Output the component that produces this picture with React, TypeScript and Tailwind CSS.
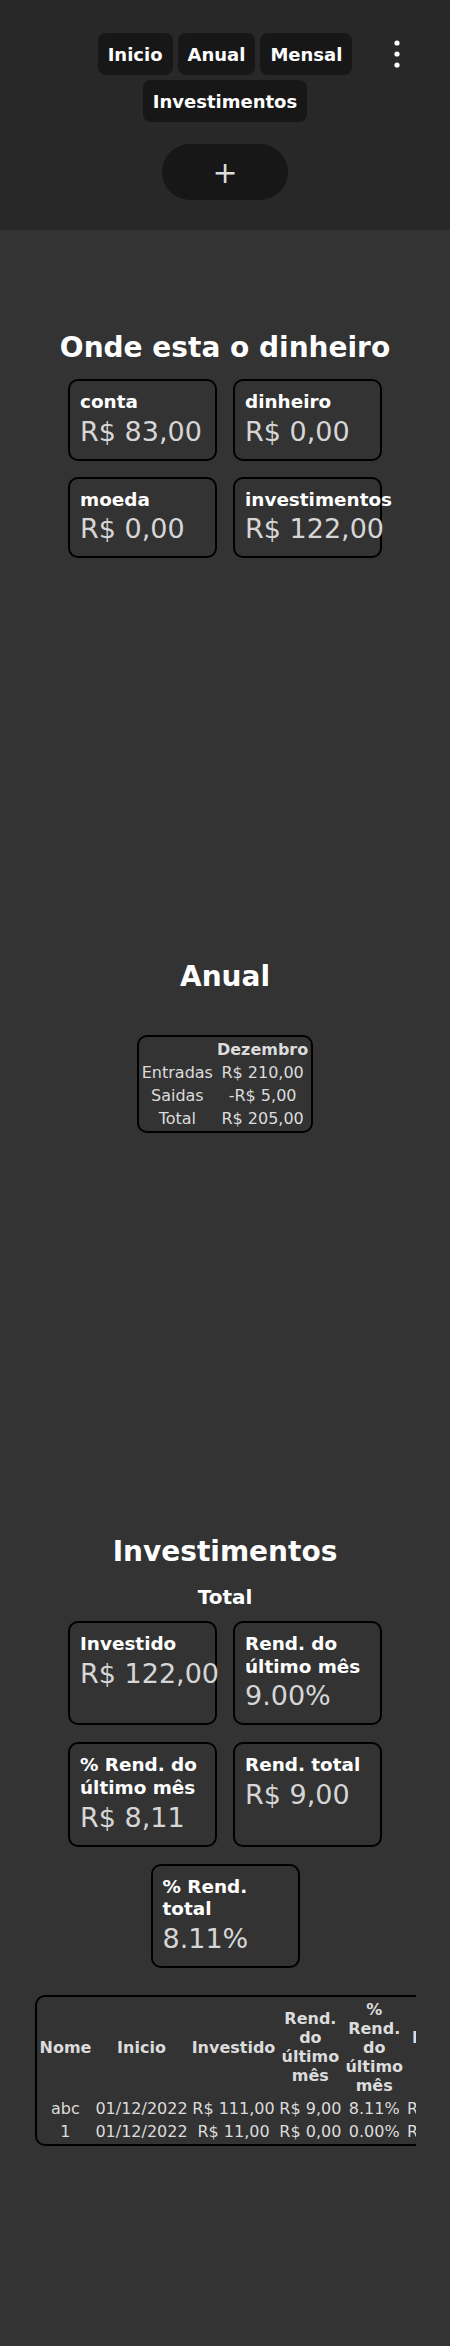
import React from 'react';

type Item = { label: string; value: string };

const dinheiro: Item[] = [
  { label: 'conta', value: 'R$ 83,00' },
  { label: 'dinheiro', value: 'R$ 0,00' },
  { label: 'moeda', value: 'R$ 0,00' },
  { label: 'investimentos', value: 'R$ 122,00' },
];

const totais: Item[] = [
  { label: 'Investido', value: 'R$ 122,00' },
  { label: 'Rend. do último mês', value: '9.00%' },
  { label: '% Rend. do último mês', value: 'R$ 8,11' },
  { label: 'Rend. total', value: 'R$ 9,00' },
  { label: '% Rend. total', value: '8.11%' },
];

const investimentos = [
  ['abc', '01/12/2022', 'R$ 111,00', 'R$ 9,00', '8.11%', 'R$ 9,00', '8.11%'],
  ['1', '01/12/2022', 'R$ 11,00', 'R$ 0,00', '0.00%', 'R$ 0,00', '0.00%'],
];

const Card: React.FC<Item> = ({ label, value }) => (
  <div className="w-[149px] border-2 border-black rounded-[10px] p-[10px]">
    <div className="text-[18.4px] leading-[22.6px] font-bold text-white">{label}</div>
    <div className="text-[27px] leading-[35px] text-[#d6d6d6] whitespace-nowrap">{value}</div>
  </div>
);

const Title: React.FC<{ children: React.ReactNode }> = ({ children }) => (
  <h2 className="text-[28px] leading-[33px] font-bold text-white text-center">{children}</h2>
);

const navItems = ['Inicio', 'Anual', 'Mensal', 'Investimentos'];

export default function App() {
  return (
    <div className="min-h-screen bg-[#333333] leading-[normal]" style={{ fontFamily: '"DejaVu Sans", "Liberation Sans", sans-serif' }}>
      <header className="bg-[#282828] pt-[33px] pb-[30px]">
        <div className="grid grid-cols-[1fr_270px_1fr]">
          <div />
          <nav className="flex flex-wrap justify-center gap-[5px]">
            {navItems.map((item) => (
              <button
                key={item}
                className="h-[42px] px-[10px] rounded-lg bg-[#171717] text-white font-bold text-[18px] flex items-center"
              >
                {item}
              </button>
            ))}
          </nav>
          <div className="flex items-start pl-[25px]">
            <button className="h-[42px] w-[24px] flex items-center justify-center">
              <svg width="24" height="42" viewBox="0 0 24 42">
                <circle cx="12" cy="10" r="2.6" fill="#ffffff" />
                <circle cx="12" cy="21" r="2.6" fill="#ffffff" />
                <circle cx="12" cy="32" r="2.6" fill="#ffffff" />
              </svg>
            </button>
          </div>
        </div>
        <div className="flex justify-center mt-[22px]">
          <button className="w-[126px] h-[56px] rounded-full bg-[#171717] text-[#dddddd] text-[30px] flex items-center justify-center">
            +
          </button>
        </div>
      </header>

      <section className="mt-[101px]">
        <Title>Onde esta o dinheiro</Title>
        <div className="w-[314px] mx-auto mt-[15px] flex flex-wrap justify-center gap-4">
          {dinheiro.map((d) => (
            <Card key={d.label} {...d} />
          ))}
        </div>
      </section>

      <section className="mt-[402px]">
        <Title>Anual</Title>
        <div className="mt-[42px] mx-auto w-max border-2 border-black rounded-[10px] text-[16px] leading-[19px] text-[#dcdcdc]">
          <table className="border-separate border-spacing-[2px] text-center">
            <thead>
              <tr>
                <th className="p-[1px]" />
                <th className="p-[1px] font-bold">Dezembro</th>
              </tr>
            </thead>
            <tbody>
              <tr>
                <td className="p-[1px]">Entradas</td>
                <td className="p-[1px] whitespace-nowrap">R$ 210,00</td>
              </tr>
              <tr>
                <td className="p-[1px]">Saidas</td>
                <td className="p-[1px] whitespace-nowrap">-R$ 5,00</td>
              </tr>
              <tr>
                <td className="p-[1px]">Total</td>
                <td className="p-[1px] whitespace-nowrap">R$ 205,00</td>
              </tr>
            </tbody>
          </table>
        </div>
      </section>

      <section className="mt-[402px] pb-[201px]">
        <Title>Investimentos</Title>
        <h3 className="mt-[17px] text-[20px] leading-[24px] font-bold text-white text-center">Total</h3>
        <div className="w-[314px] mx-auto mt-[12px] flex flex-wrap justify-center gap-x-4 gap-y-[17px]">
          {totais.map((t) => (
            <Card key={t.label} {...t} />
          ))}
        </div>
        <div className="mt-[27px] mx-auto w-[381px] overflow-hidden">
          <div className="w-max border-2 border-black rounded-[10px] text-[16px] leading-[19px] text-[#dcdcdc]">
            <table className="border-separate border-spacing-[2px] text-center">
              <thead>
                <tr className="font-bold">
                  <th className="p-[1px] align-middle">Nome</th>
                  <th className="p-[1px] align-middle">Inicio</th>
                  <th className="p-[1px] align-middle">Investido</th>
                  <th className="p-[1px] align-middle w-[1px]">Rend. do último mês</th>
                  <th className="p-[1px] align-middle w-[1px]">% Rend. do último mês</th>
                  <th className="p-[1px] align-middle w-[1px]">Rend. total</th>
                  <th className="p-[1px] align-middle w-[1px]">% Rend. total</th>
                </tr>
              </thead>
              <tbody>
                {investimentos.map((row) => (
                  <tr key={row[0]}>
                    {row.map((cell, i) => (
                      <td key={i} className="p-[1px] whitespace-nowrap">
                        {cell}
                      </td>
                    ))}
                  </tr>
                ))}
              </tbody>
            </table>
          </div>
        </div>
      </section>
    </div>
  );
}
